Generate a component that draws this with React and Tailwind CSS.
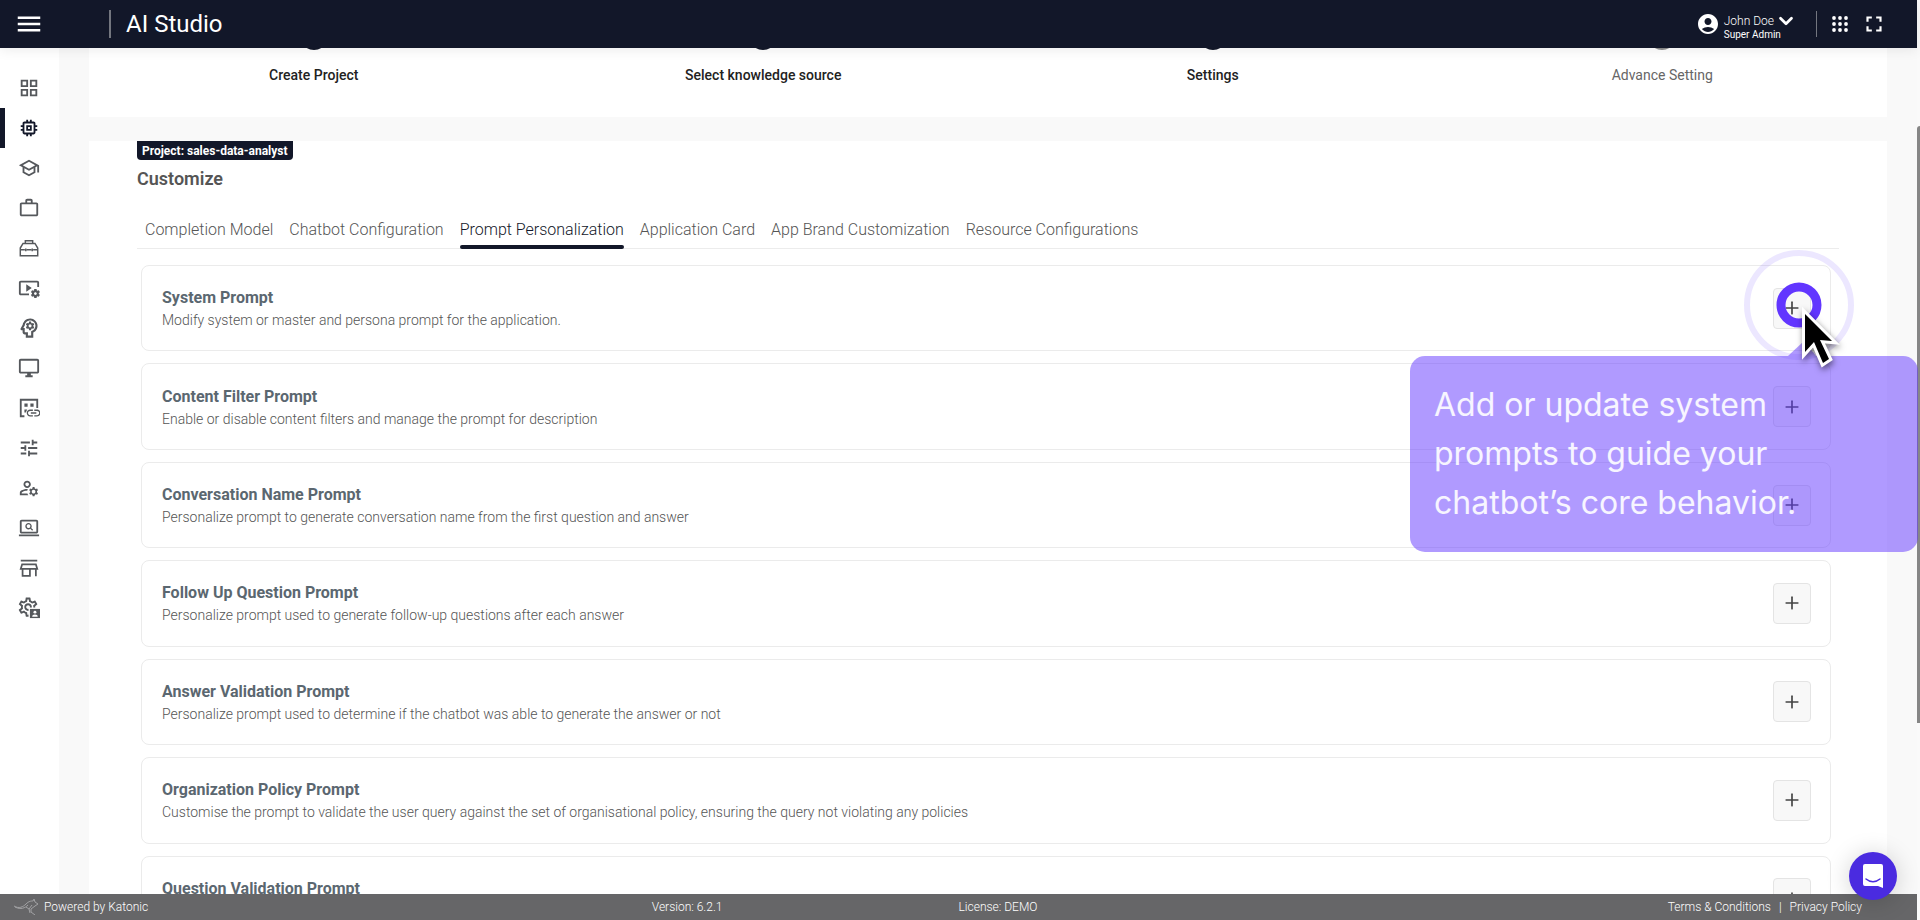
import React, { useState } from "react";
import {
  MdOutlineMemory,
  MdOutlineSchool,
  MdWorkOutline,
  MdOutlineDesktopWindows,
  MdTune,
  MdOutlineManageAccounts,
  MdVideoSettings,
  MdOutlinePsychology,
  MdOutlineScreenSearchDesktop,
  MdOutlineSettings,
  MdLink,
  MdAccountCircle,
  MdFullscreen,
  MdMenu,
  MdGridView,
} from "react-icons/md";
import { Plus, ChevronDown } from "lucide-react";

const Line = ({ children }) => (
  <svg viewBox="0 0 24 24" width="22" height="22" fill="none" stroke="currentColor" strokeWidth="1.6">
    {children}
  </svg>
);

const ToolboxIcon = () => (
  <Line>
    <path d="M2.500 12l3-5h13l3 5v8.500h-19zM8 7V4h8v3M2.500 14h5M9.500 14h5M16.500 14h5M8.500 12.500v3M15.500 12.500v3" />
  </Line>
);

const HeadIcon = () => (
  <Line>
    <MdOutlinePsychology x="-2" y="-2" size="28" />
  </Line>
);

const DataLinkIcon = () => (
  <Line>
    <path d="M7 21H3V3h18v9" strokeWidth="2" />
    <path d="M7 7h3.500v3.500H7zM13.500 7H17v3.500h-3.500zM7 13.500h3l-1.500 3.500H7z" fill="currentColor" stroke="none" />
    <MdLink x="8" y="8.500" size="18" />
  </Line>
);

const StoreIcon = () => (
  <Line>
    <path d="M3 4h18M4.500 8h15l1.500 5H3zM5 13v7.500h8V13M19.500 13v8" strokeWidth="1.900" />
  </Line>
);

const AdminIcon = () => (
  <Line>
    <MdOutlineSettings x="-1.500" y="-1.500" size="25" />
    <path d="M11.500 11.500H25V25H11.500z" fill="#fff" stroke="none" />
    <path d="M13 13h11v10H13z" fill="currentColor" stroke="none" />
    <circle cx="18.500" cy="16.500" r="1.600" fill="#fff" stroke="none" />
    <path d="M15.500 21.500a3 2.500 0 0 1 6 0z" fill="#fff" stroke="none" />
  </Line>
);

const DotsIcon = () => (
  <svg width="16" height="16" viewBox="0 0 16 16" fill="currentColor">
    {[2, 8, 14].map((y) => [2, 8, 14].map((x) => <circle key={x + "-" + y} cx={x} cy={y} r="1.900" />))}
  </svg>
);

const menu = [
  { label: "Dashboard", icon: MdGridView },
  { label: "AI Studio", icon: MdOutlineMemory, active: true },
  { label: "Training", icon: MdOutlineSchool },
  { label: "Workspace", icon: MdWorkOutline },
  { label: "Toolbox", icon: ToolboxIcon },
  { label: "Pipelines", icon: MdVideoSettings },
  { label: "Models", icon: HeadIcon },
  { label: "Monitoring", icon: MdOutlineDesktopWindows },
  { label: "Data sources", icon: DataLinkIcon },
  { label: "Fine tuning", icon: MdTune },
  { label: "Users", icon: MdOutlineManageAccounts },
  { label: "Explore", icon: MdOutlineScreenSearchDesktop },
  { label: "Marketplace", icon: StoreIcon },
  { label: "Administration", icon: AdminIcon },
];

const steps = [
  { name: "Create Project", done: true },
  { name: "Select knowledge source", done: true },
  { name: "Settings", done: true },
  { name: "Advance Setting", done: false },
];

const tabs = [
  "Completion Model",
  "Chatbot Configuration",
  "Prompt Personalization",
  "Application Card",
  "App Brand Customization",
  "Resource Configurations",
];

const prompts = [
  { title: "System Prompt", text: "Modify system or master and persona prompt for the application." },
  { title: "Content Filter Prompt", text: "Enable or disable content filters and manage the prompt for description" },
  { title: "Conversation Name Prompt", text: "Personalize prompt to generate conversation name from the first question and answer" },
  { title: "Follow Up Question Prompt", text: "Personalize prompt used to generate follow-up questions after each answer" },
  { title: "Answer Validation Prompt", text: "Personalize prompt used to determine if the chatbot was able to generate the answer or not" },
  { title: "Organization Policy Prompt", text: "Customise the prompt to validate the user query against the set of organisational policy, ensuring the query not violating any policies" },
  { title: "Question Validation Prompt", text: "" },
];

const Header = () => (
  <header className="relative z-10 flex h-12 shrink-0 items-center bg-[#121729] text-white shadow-[0_2px_12px_rgba(0,0,0,0.08)]">
    <button aria-label="Menu" className="ml-3.5 flex">
      <MdMenu size={30} />
    </button>
    <div className="ml-[65px] h-7 w-0.5 bg-[#73767f]" />
    <h1 className="ml-[15px] text-2xl">AI Studio</h1>
    <button className="ml-auto flex items-center gap-1 text-left">
      <MdAccountCircle size={24} />
      <span className="pt-1.5">
        <span className="flex items-center gap-px text-xs leading-4 font-light">
          John Doe <ChevronDown size={22} strokeWidth={3} className="-my-1" />
        </span>
        <span className="block text-[10px] leading-3">Super Admin</span>
      </span>
    </button>
    <div className="ml-[19px] h-[26px] w-px bg-[#73767f]" />
    <button aria-label="Apps" className="ml-[15px] flex">
      <DotsIcon />
    </button>
    <button aria-label="Full screen" className="mr-[30px] ml-[13px] flex">
      <MdFullscreen size={26} />
    </button>
  </header>
);

const Sidebar = () => (
  <nav className="flex w-[59px] shrink-0 flex-col bg-white pt-5">
    {menu.map(({ label, icon: Icon, active }) => (
      <a
        key={label}
        href="#"
        aria-label={label}
        className={
          active
            ? "flex h-10 items-center border-l-5 border-[#121729] pl-[13px] text-[#121729]"
            : "flex h-10 items-center pl-[18px] text-[#55585c]"
        }
      >
        <Icon size={22} />
      </a>
    ))}
  </nav>
);

const PromptCard = ({ title, text }) => (
  <div className="flex items-center justify-between rounded-lg border border-[#ebebeb] pr-[19px] pl-5">
    <div className="flex flex-col pt-0.5">
      <h3 className="text-base leading-[22px] font-bold text-[#5b6770]">{title}</h3>
      <p className="h-[22px] text-sm leading-[22px] font-light text-[#555]">{text}</p>
    </div>
    <button
      aria-label={"Open " + title}
      className="flex h-[41px] w-[38px] items-center justify-center rounded border border-[#e4e4e4] bg-[#f8f8f8] text-[#444]"
    >
      <Plus size={20} strokeWidth={2} />
    </button>
  </div>
);

const Footer = () => (
  <footer className="relative z-10 grid h-[26px] shrink-0 grid-cols-[34%_16%_1fr] items-center bg-[#666668] text-xs font-light text-white">
    <div className="flex items-center gap-1.5 pl-3.5">
      <svg width="24" height="16" viewBox="0 0 24 16" fill="none" stroke="#a2a2a4">
        <path d="M0 7c5 3 9 1 12-2s5-3 7-3l1-2 1 3 3 2-3 2-4 3v3l4 3M1 8c6 3 10 1 13-2M12 8l3 2 3-4M15 10l1 4" />
      </svg>
      Powered by Katonic
    </div>
    <span>Version: 6.2.1</span>
    <div className="flex justify-between pr-[55px]">
      <span>License: DEMO</span>
      <div className="flex gap-2">
        <a href="#">Terms &amp; Conditions</a>
        <span>|</span>
        <a href="#">Privacy Policy</a>
      </div>
    </div>
  </footer>
);

const Tour = () => (
  <div className="pointer-events-none absolute top-[250px] -right-px z-20 w-[508px]">
    <svg width="180" height="116" viewBox="0 0 180 116" className="absolute top-0 right-0">
      <circle cx="61" cy="55" r="52" fill="none" stroke="#6236ff" strokeOpacity=".12" strokeWidth="6" />
      <path d="M50 106l16-15 12 15z" fill="#6236ff" fillOpacity=".5" />
      <circle cx="61" cy="55" r="18" fill="none" stroke="#6236ff" strokeWidth="9" />
    </svg>
    <div className="mt-[106px] h-[196px] rounded-[15px] bg-[#6236ff]/50 py-6 pl-6 font-['Inter'] text-[32px] leading-[49px] text-white/90">
      <p>Add or update system</p>
      <p>prompts to guide your</p>
      <p>chatbot’s core behavior.</p>
    </div>
    <svg width="60" height="80" viewBox="0 0 60 80" className="absolute top-[47px] right-[68px] drop-shadow-[1px_3px_3px_rgba(0,0,0,0.5)]">
      <path
        d="M15 17v38l9-10 9 21 6-4-9-19 12 1z"
        fill="#000"
        stroke="#fff"
        strokeWidth="6"
        strokeMiterlimit="8"
        paintOrder="stroke"
      />
    </svg>
  </div>
);

const App = () => {
  const [activeTab, setActiveTab] = useState("Prompt Personalization");

  return (
    <div className="flex h-screen overflow-hidden bg-[#f9f9f9] font-['Roboto',sans-serif]">
      <div className="relative flex min-w-0 flex-1 flex-col">
        <Header />
        <div className="flex min-h-0 flex-1">
          <Sidebar />
          <main className="flex min-w-0 flex-1 flex-col gap-6 overflow-hidden px-[30px]">
            {/* stepper */}
            <ol className="grid h-[69px] shrink-0 grid-cols-4 bg-white">
              {steps.map((step) => (
                <li key={step.name} className="flex flex-col items-center gap-[15px]">
                  <span
                    className={
                      step.done
                        ? "-mt-[26px] size-7 rounded-full bg-[#121729]"
                        : "-mt-[26px] size-7 rounded-full bg-[#8a8a8a]"
                    }
                  />
                  <span
                    className={
                      step.done
                        ? "text-sm leading-5 font-medium text-[#222]"
                        : "text-sm leading-5 text-[#666]"
                    }
                  >
                    {step.name}
                  </span>
                </li>
              ))}
            </ol>

            <section className="shrink-0 bg-white px-12">
              <span className="block h-[19px] w-fit rounded-b bg-[#121729] px-[5px] text-xs leading-5 font-bold text-white">
                Project: sales-data-analyst
              </span>
              <h2 className="mt-2 text-lg leading-[22px] font-semibold text-[#555]">Customize</h2>

              <div role="tablist" className="mt-6 flex h-[35px] gap-4 border-b border-[#ececec] px-2">
                {tabs.map((tab) => (
                  <button
                    key={tab}
                    role="tab"
                    aria-selected={tab === activeTab}
                    onClick={() => setActiveTab(tab)}
                    className={
                      tab === activeTab
                        ? "-mb-px flex flex-col justify-between pt-1 text-base font-light text-[#121729] after:h-1 after:w-full after:rounded-xs after:bg-[#121729]"
                        : "flex flex-col pt-1 text-base font-light text-[#555]"
                    }
                  >
                    {tab}
                  </button>
                ))}
              </div>

              {/* prompt list */}
              <div className="mt-4 grid h-[677px] auto-rows-fr gap-3 pr-2 pl-1">
                {prompts.map((prompt) => (
                  <PromptCard key={prompt.title} title={prompt.title} text={prompt.text} />
                ))}
              </div>
            </section>
          </main>
        </div>
        <Footer />
        <Tour />
        <button
          aria-label="Open chat"
          className="absolute right-5 bottom-5 z-20 flex size-12 items-center justify-center rounded-full bg-[#4a2be0] shadow-[0_2px_24px_rgba(0,0,0,0.18)]"
        >
          <svg width="24" height="26" viewBox="0 0 24 26">
            <path d="M4 1h16a2 2 0 0 1 2 2v22l-5-2H4a2 2 0 0 1-2-2V3a2 2 0 0 1 2-2z" fill="#fff" />
            <path d="M5 16c4 3.500 10 3.500 14 0" fill="none" stroke="#4a2be0" strokeWidth="1.500" strokeLinecap="round" />
          </svg>
        </button>
      </div>
      {/* scrollbar */}
      <div className="w-[3px] bg-[#fafafa] pt-[126px]">
        <div className="h-[597px] rounded-tl-sm bg-[#868686]" />
      </div>
    </div>
  );
};

export default App;
